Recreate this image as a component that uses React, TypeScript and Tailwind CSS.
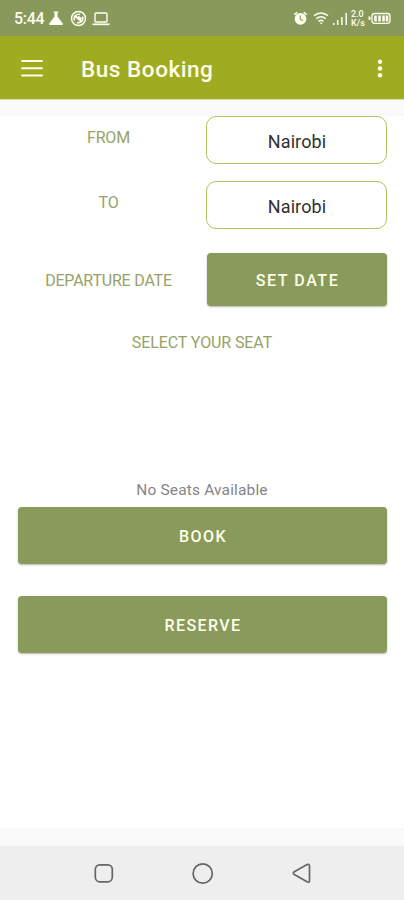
import React from "react";

function StatusBar() {
  return (
    <header className="flex h-9 shrink-0 items-center justify-between bg-[#89995b] pr-3 pl-3.5 text-[#fdfff0]">
      <div className="flex h-full items-center">
        <span className="w-[34px] pt-[2px] text-[16px] leading-5 font-medium tracking-[-0.3px] whitespace-nowrap">5:44</span>
        <svg className="h-9 w-16" viewBox="48 0 64 36" fill="none" stroke="currentColor">
          <path d="M53.5 11.5h5v1h-1v4l5 6.500q1 2-1 2h-11q-2 0-1-2l5-6.500v-4h-1z" fill="currentColor" stroke="none" />
          <circle cx="78.500" cy="18.500" r="7" strokeWidth="1.500" />
          <path d="M74.500 20.500a4.500 4.500 0 0 1 5.500-6M82.500 16.500a4.500 4.500 0 0 1-5.500 6" strokeWidth="1.500" />
          <path d="M74.500 15.500l7.500 6.500M78 16.500l3.500 2.500" strokeWidth="1.900" />
          <rect x="95" y="13" width="12" height="9" rx="1" strokeWidth="1.400" />
          <path d="M92.500 24.300h17" strokeWidth="1.700" />
        </svg>
      </div>
      <div className="flex h-full items-center">
        <svg className="h-9 w-[58px]" viewBox="292 0 58 36" fill="none" stroke="currentColor">
          <circle cx="300.500" cy="18.900" r="5.900" fill="currentColor" stroke="none" />
          <path d="M294.300 14.700l3-2.300M306.700 14.700l-3-2.300" strokeWidth="1.700" />
          <path d="M300.300 15.500v3.700l2.500 1.500" stroke="#89995b" strokeWidth="1.100" />
          <path d="M314 15.700q7-5.600 14 0M316.300 18.600q4.700-3.800 9.400 0M318.500 21.300q2.500-2 5 0" strokeWidth="1.500" />
          <path d="M319.800 22.500h2.800l-1.400 2z" fill="currentColor" stroke="none" />
          <path d="M333.700 23v2M337.700 20v5M341.900 17v8M346.200 13v12" strokeWidth="1.500" />
        </svg>
        <div className="flex w-[18px] flex-col pt-px pl-px text-[9px] leading-[9px] font-medium">
          <span>2.0</span>
          <span>K/s</span>
        </div>
        <svg className="h-9 w-6" viewBox="368 0 24 36" fill="none" stroke="currentColor">
          <rect x="372" y="13.500" width="18" height="9.800" rx="2.500" strokeWidth="1.300" />
          <path d="M369.500 16.500v3.500" strokeWidth="2" />
          <path d="M375.500 15.500v6M379.500 15.500v6M383.500 15.500v6M387 15.500v6" strokeWidth="2.600" />
        </svg>
      </div>
    </header>
  );
}

function AppBar() {
  return (
    <div className="flex h-[63px] shrink-0 items-center bg-[#9fab21] text-[#fffde8]">
      <svg className="ml-5 h-6 w-6" viewBox="0 0 24 24" fill="none" stroke="currentColor" strokeWidth="2">
        <path d="M1.300 5h21.500M1.300 12.200h21.500M1.300 19.400h21.500" />
      </svg>
      <h1 className="ml-[37px] flex-1 pt-[3px] text-[22.500px] leading-7 font-medium tracking-[0.550px]">Bus Booking</h1>
      <svg className="mr-3 h-6 w-6" viewBox="0 0 24 24" fill="currentColor">
        <circle cx="12" cy="5.700" r="2.200" />
        <circle cx="12" cy="12.500" r="2.200" />
        <circle cx="12" cy="19.300" r="2.200" />
      </svg>
    </div>
  );
}

function Field({ label, value }: { label: string; value: string }) {
  return (
    <div className="flex h-12 pr-[17px]">
      <div className="ml-[18px] flex w-[181px] justify-center pt-3 text-[16px] leading-5 tracking-[-0.200px] text-[#96a168]">
        <span>{label}</span>
      </div>
      <div className="ml-[7px] flex h-12 flex-1 items-center justify-center rounded-[10px] border-[1.500px] border-[#b0c263] pt-[3px] pl-px text-[18px] tracking-[0.100px] text-[#303030]">
        {value}
      </div>
    </div>
  );
}

function ActionButton({ children, className }: { children: React.ReactNode; className: string }) {
  return (
    <button className={`rounded-[4px] bg-[#8a9a5b] pt-[2px] pl-px text-center text-[16px] font-medium text-[#fbffec] shadow-[0_1px_2px_rgba(0,0,0,0.3)] ${className}`}>
      {children}
    </button>
  );
}

function NavigationBar() {
  return (
    <nav className="flex h-[54px] shrink-0 bg-[#eeeeee]">
      <svg className="h-[54px] w-full" viewBox="0 0 404 54" fill="none" stroke="#666" strokeWidth="1.700">
        <rect x="95.300" y="18.800" width="17" height="17" rx="4.500" />
        <circle cx="202.700" cy="27.500" r="9.600" />
        <path d="M294.300 25.800L307 18.600q2.500-1 2.500 1.500v14.500q0 2.500-2.500 1.200l-12.700-7.300q-2-1.300 0-2.700z" />
      </svg>
    </nav>
  );
}

export default function App() {
  return (
    <div className="flex h-[900px] w-[404px] flex-col overflow-hidden bg-[#fafafa] font-['Roboto',sans-serif]">
      <StatusBar />
      <AppBar />
      <div className="h-[17px] shrink-0 border-t border-[#dde0a5]" />
      <main className="flex h-[712px] shrink-0 flex-col bg-white">
        <Field label="FROM" value="Nairobi" />
        <div className="h-[17px]" />
        <Field label="TO" value="Nairobi" />
        <div className="mt-6 flex h-[53px] items-center pr-[17px]">
          <span className="ml-[18px] w-[181px] pt-[2px] text-center text-[16px] leading-5 tracking-[-0.200px] text-[#96a168]">DEPARTURE DATE</span>
          <ActionButton className="ml-2 h-[53px] w-[180px] tracking-[1.600px]">SET DATE</ActionButton>
        </div>
        <p className="mt-[27px] text-center text-[16px] leading-5 tracking-[-0.100px] text-[#96a168]">SELECT YOUR SEAT</p>
        <p className="mt-[127px] text-center text-[15.500px] leading-5 tracking-[0.150px] text-[#858585]">No Seats Available</p>
        <ActionButton className="mr-[17px] ml-[18px] mt-[7px] h-[57px] tracking-[1.400px]">BOOK</ActionButton>
        <ActionButton className="mr-[17px] ml-[18px] mt-8 h-[57px] tracking-[1.400px]">RESERVE</ActionButton>
      </main>
      <div className="flex-1 bg-[#fafafa]" />
      <NavigationBar />
    </div>
  );
}
